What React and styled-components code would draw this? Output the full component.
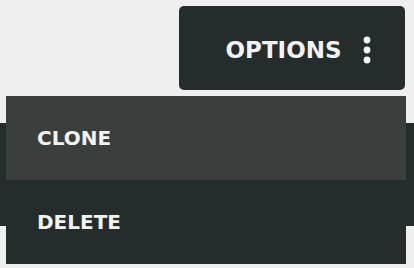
import React from 'react';
import styled, { createGlobalStyle } from 'styled-components';

const Global = createGlobalStyle`
  html, body {
    margin: 0;
    padding: 0;
    background: #efefef;
  }
  body {
    font-family: "DejaVu Sans", "Liberation Sans", sans-serif;
  }
`;

const Page = styled.div`
  position: relative;
  width: 414px;
  height: 268px;
  overflow: hidden;
`;

const Header = styled.div`
  display: flex;
  justify-content: flex-end;
  padding: 6px 9px 0 0;
`;

const OptionsButton = styled.button`
  display: flex;
  align-items: center;
  justify-content: center;
  gap: 21px;
  width: 226px;
  height: 84px;
  padding: 3px 0 0 12px;
  border: none;
  border-radius: 5px;
  background: #252c2c;
  color: #f2f2f2;
  font-family: inherit;
  font-size: 23px;
  font-weight: bold;
  cursor: pointer;
`;

const Behind = styled.div`
  margin-top: 33px;
  height: 103px;
  background: #252c2c;
`;

const Menu = styled.ul`
  position: absolute;
  top: 96px;
  left: 6px;
  right: 8px;
  margin: 0;
  padding: 0;
  list-style: none;
`;

const Item = styled.li`
  display: flex;
  align-items: center;
  height: 84px;
  padding-left: 31px;
  background: ${p => (p.$active ? '#3a3f3e' : '#252c2c')};
  color: #f2f2f2;
  font-size: 20px;
  font-weight: bold;
`;

const Dots = () => (
  <svg width="8" height="28" viewBox="0 0 8 28">
    <circle cx="4" cy="4" r="3.4" fill="#f2f2f2" />
    <circle cx="4" cy="14" r="3.4" fill="#f2f2f2" />
    <circle cx="4" cy="24" r="3.4" fill="#f2f2f2" />
  </svg>
);

export default function App() {
  return (
    <Page>
      <Global />
      <Header>
        <OptionsButton>
          OPTIONS
          <Dots />
        </OptionsButton>
      </Header>
      <Behind />
      <Menu>
        <Item $active>CLONE</Item>
        <Item>DELETE</Item>
      </Menu>
    </Page>
  );
}
